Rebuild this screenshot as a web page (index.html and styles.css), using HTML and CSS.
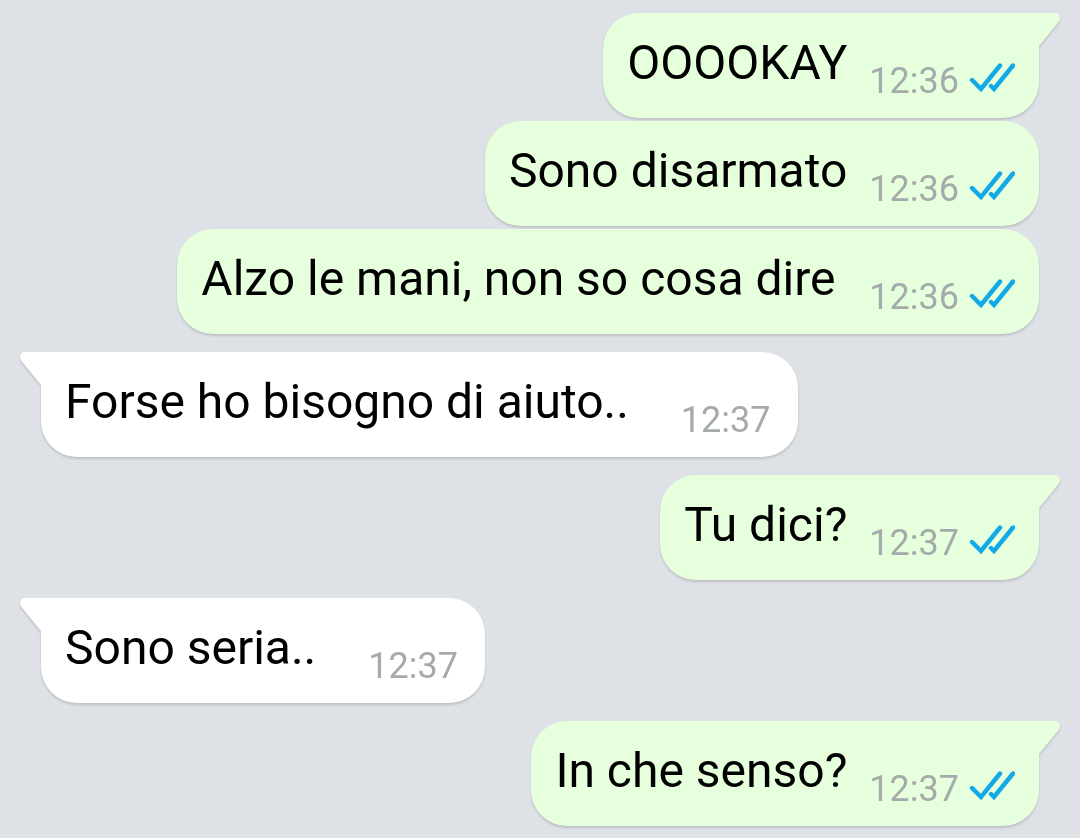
FILE: index.html
```
<!DOCTYPE html>
<html lang="it">

<head>
    <meta charset="UTF-8">
    <meta name="viewport" content="width=device-width, initial-scale=1.0">
    <title>Chat</title>
    <link rel="stylesheet" href="styles.css">
</head>

<body>
    <svg class="sprite" aria-hidden="true">
        <symbol id="ticks" viewBox="0 0 46 32">
            <path d="M3 17 L12 26 L31 2.5 M22 23 L25 26 L44 2.5" fill="none" stroke="#11a9e8" stroke-width="4.4" stroke-linecap="round" />
        </symbol>
        <symbol id="tail" viewBox="0 0 22 36">
            <path d="M0 0 H16 C20.500 0 22.500 5 19.500 9 L0 33 Z" fill="currentColor" />
        </symbol>
    </svg>

    <main class="chat">
        <div class="message out first">
            <svg class="tail"><use href="#tail" /></svg>
            <p>OOOOKAY</p>
            <div class="meta"><time>12:36</time><svg class="ticks"><use href="#ticks" /></svg></div>
        </div>
        <div class="message out">
            <p>Sono disarmato</p>
            <div class="meta"><time>12:36</time><svg class="ticks"><use href="#ticks" /></svg></div>
        </div>
        <div class="message out">
            <p>Alzo le mani, non so cosa dire&nbsp;</p>
            <div class="meta"><time>12:36</time><svg class="ticks"><use href="#ticks" /></svg></div>
        </div>
        <div class="message in first">
            <svg class="tail"><use href="#tail" /></svg>
            <p>Forse ho bisogno di aiuto..</p>
            <div class="meta"><time>12:37</time></div>
        </div>
        <div class="message out first">
            <svg class="tail"><use href="#tail" /></svg>
            <p>Tu dici?</p>
            <div class="meta"><time>12:37</time><svg class="ticks"><use href="#ticks" /></svg></div>
        </div>
        <div class="message in first">
            <svg class="tail"><use href="#tail" /></svg>
            <p>Sono seria..</p>
            <div class="meta"><time>12:37</time></div>
        </div>
        <div class="message out first">
            <svg class="tail"><use href="#tail" /></svg>
            <p>In che senso?</p>
            <div class="meta"><time>12:37</time><svg class="ticks"><use href="#ticks" /></svg></div>
        </div>
    </main>
</body>

</html>
```

FILE: styles.css
```
* {
    margin: 0;
    padding: 0;
    box-sizing: border-box;
}

body {
    background: #dee1e6;
    font-family: Roboto, sans-serif;
    color: #000;
}

.sprite {
    display: none;
}

.chat {
    display: flex;
    flex-direction: column;
    gap: 3px;
    padding: 13px 41px 12px;
}

.message {
    position: relative;
    display: flex;
    align-items: flex-end;
    padding: 22px 24px 19px;
    border-radius: 36px;
    filter: drop-shadow(0 2px 1px rgba(0, 0, 0, 0.14));
}

.message p {
    color: #000;
    font-size: 48px;
    line-height: 56px;
    margin-bottom: 8px;
}

.out {
    align-self: flex-end;
    gap: 22px;
    background: #e6ffdc;
    color: #e6ffdc;
}

.in {
    align-self: flex-start;
    gap: 52px;
    padding-right: 27px;
    background: #fff;
    color: #fff;
}

.first {
    margin-top: 15px;
}

.first:nth-child(1) {
    margin-top: 0;
}

.out.first {
    border-top-right-radius: 0;
}

.in.first {
    border-top-left-radius: 0;
}

/* little corner pointing at the sender */
.tail {
    position: absolute;
    top: 0;
    left: 100%;
    width: 22px;
    height: 36px;
}

.in .tail {
    left: auto;
    right: 100%;
    transform: scaleX(-1);
}

.meta {
    display: flex;
    align-items: flex-start;
    gap: 10px;
    color: #a5abaa;
    font-size: 36px;
    line-height: 36px;
}

.ticks {
    width: 46px;
    height: 32px;
}
```
